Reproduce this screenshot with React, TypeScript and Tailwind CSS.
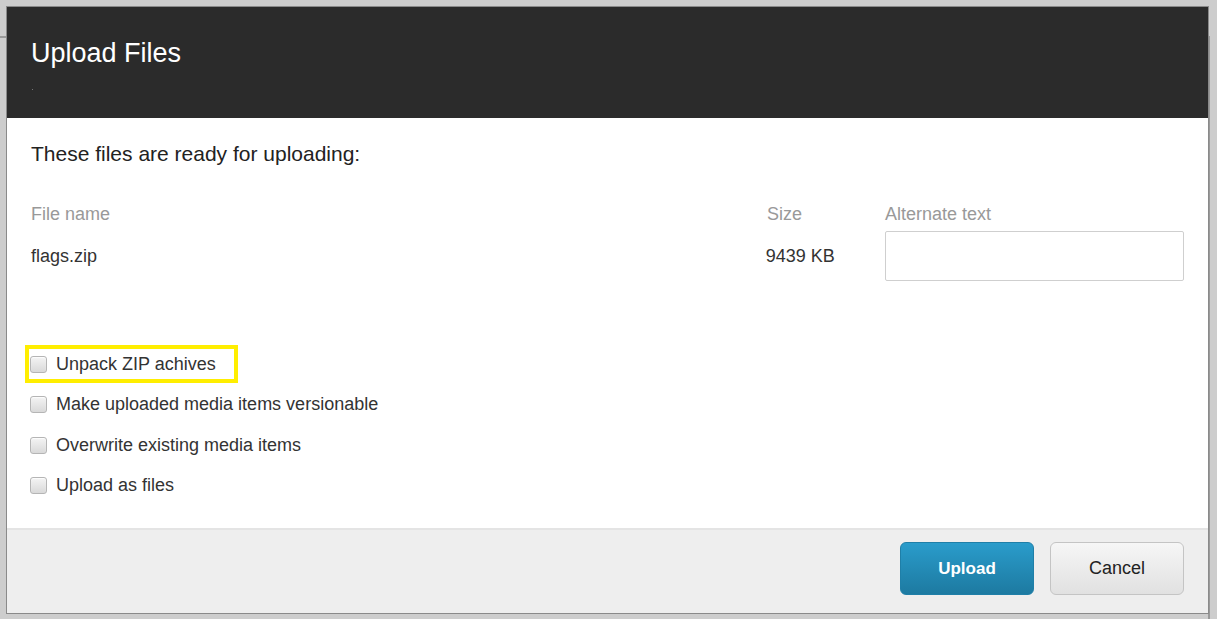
import { useState } from 'react';

const options = [
  { id: 'unpack', label: 'Unpack ZIP achives', highlight: true },
  { id: 'versionable', label: 'Make uploaded media items versionable' },
  { id: 'overwrite', label: 'Overwrite existing media items' },
  { id: 'asfiles', label: 'Upload as files' },
];

function Checkbox({ label }: { label: string }) {
  const [checked, setChecked] = useState(false);
  return (
    <label className="flex items-center h-[24px] gap-[9px] cursor-pointer">
      <span
        onClick={() => setChecked(!checked)}
        className="w-[17px] h-[17px] rounded-[3px] border border-[#b5b5b5] bg-gradient-to-b from-[#f4f4f4] to-[#d9d9d9] shadow-[inset_0_1px_1px_rgba(255,255,255,0.8)]"
      >
        {checked && <span className="block text-[12px] leading-[15px] text-center">✓</span>}
      </span>
      <span className="text-[18px] text-[#333]">{label}</span>
    </label>
  );
}

export default function App() {
  return (
    <div
      className="relative w-[1217px] h-[619px] bg-[#cdcdcd] overflow-hidden"
      style={{ fontFamily: '"Liberation Sans", Arial, sans-serif' }}
    >
      {/* page behind the dialog */}
      <div className="absolute left-0 top-[36px] w-[1210px] h-[600px] border-t-2 border-r-2 border-[#999]" />

      <div className="absolute left-[6px] top-[6px] w-[1203px] h-[608px] border border-[#8a8a8a] flex flex-col bg-white">
        <div className="h-[111px] bg-[#2b2b2b] px-[24px] pt-[30px] relative">
          <h1 className="text-white text-[27px] leading-[32px]">Upload Files</h1>
          <span className="absolute left-[25px] top-[82px] w-px h-px bg-[#777]" />
        </div>

        <div className="flex-1 px-[24px] pt-[24px]">
          <p className="text-[21px] text-[#222] leading-[24px]">These files are ready for uploading:</p>

          <div className="flex mt-[37px] text-[18px] leading-[22px] text-[#999]">
            <span className="w-[736px]">File name</span>
            <span className="w-[118px]">Size</span>
            <span>Alternate text</span>
          </div>
          <div className="flex items-center mt-[6px] text-[18px] text-[#333]">
            <span className="w-[736px]">flags.zip</span>
            <span className="w-[118px]">9439 KB</span>
            <input className="ml-px w-[300px] h-[50px] border border-[#cfcfcf] rounded-[2px] outline-none px-2" />
          </div>

          <div className="flex flex-col gap-[16.5px] mt-[71px] -ml-px items-start">
            {options.map(o =>
              o.highlight ? (
                <div key={o.id} className="-ml-[5px] -my-[7px] border-[4px] border-[#ffee00] pl-[1px] pr-[18px] py-[3px]">
                  <Checkbox label={o.label} />
                </div>
              ) : (
                <Checkbox key={o.id} label={o.label} />
              )
            )}
          </div>
        </div>

        <div className="h-[85px] bg-[#eeeeee] border-t-2 border-[#e4e4e4] flex items-start justify-end gap-[16px] pr-[24px] pt-[12px]">
          <button className="w-[134px] h-[53px] rounded-[6px] border border-[#1f7fa8] bg-gradient-to-b from-[#2a9ccb] to-[#1d7aa1] text-white text-[17px] font-bold">
            Upload
          </button>
          <button className="w-[134px] h-[53px] rounded-[6px] border border-[#c4c4c4] bg-gradient-to-b from-[#f6f6f6] to-[#e1e1e1] text-[#222] text-[18px]">
            Cancel
          </button>
        </div>
      </div>
    </div>
  );
}
